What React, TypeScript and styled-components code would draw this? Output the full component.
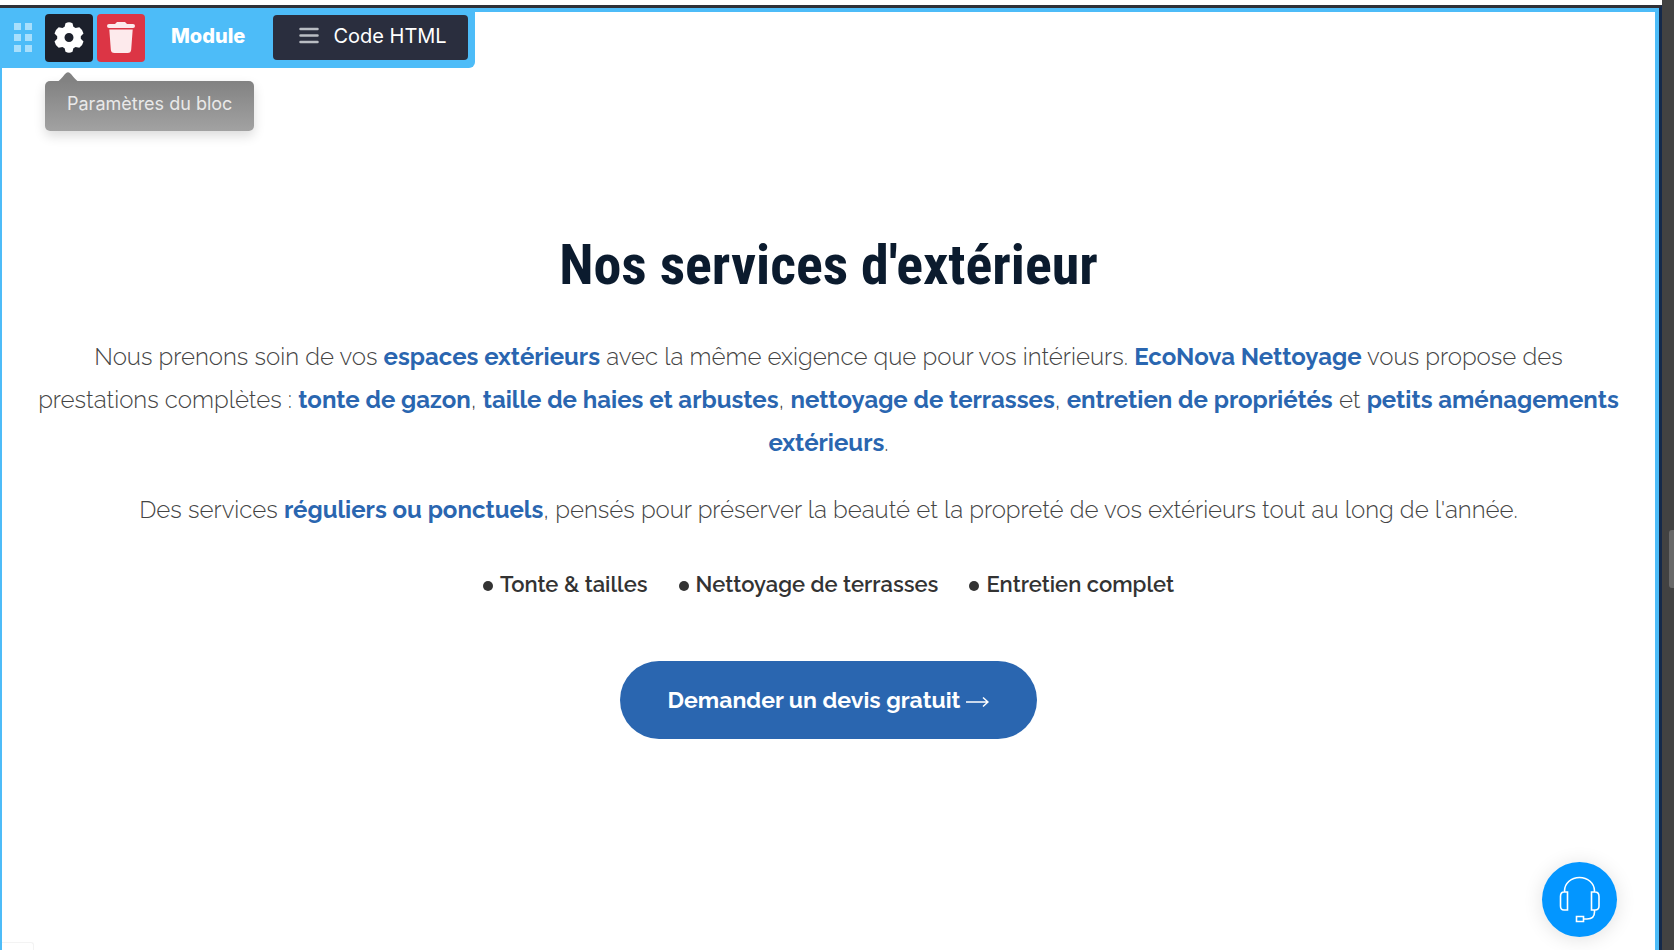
import React from "react";
import styled, { createGlobalStyle } from "styled-components";

const GlobalStyle = createGlobalStyle`
  * { box-sizing: border-box; }
  html, body { margin: 0; overflow: hidden; background: #fff; }
`;

const Page = styled.div`
  display: flex;
  height: 100vh;
  font-family: Inter, "Liberation Sans", sans-serif;
`;

const Viewport = styled.div`
  flex: 1;
  min-width: 0;
  display: flex;
  flex-direction: column;
  padding-top: 5px;
`;

const Preview = styled.div`
  flex: 1;
  border-top: 3px solid #2f3036;
  border-right: 3px solid #14294a;
  display: flex;
`;

const Block = styled.section`
  position: relative;
  flex: 1;
  min-width: 0;
  border: 4px solid #4dbcf8;
  border-left-width: 2px;
  border-bottom: 0;
`;

const ScrollTrack = styled.div`
  width: 12px;
  background: #424242;
  display: flex;
  flex-direction: column;
  align-items: flex-end;
  padding-top: 530px;
`;

const ScrollThumb = styled.div`
  width: 5px;
  height: 58px;
  border-radius: 3px 0 0 3px;
  background: #686868;
`;

const Toolbar = styled.div`
  position: absolute;
  top: -4px;
  left: -2px;
  height: 60px;
  display: flex;
  align-items: flex-start;
  padding: 6px 7px 0 14px;
  background: #4dbcf8;
  border-radius: 0 0 6px 0;
`;

const DragHandle = styled.div`
  display: grid;
  grid-template-columns: 7px 7px;
  gap: 4px;
  margin: 9px 13px 0 0;

  i {
    height: 7px;
    background: #a8dffc;
  }
`;

const IconButton = styled.button<{ $tone: string }>`
  width: 48px;
  height: 48px;
  margin-right: 4px;
  padding: 0 0 2px;
  border: 0;
  border-radius: 4px;
  background: ${(p) => p.$tone};
  display: grid;
  place-items: center;
`;

const ModuleLabel = styled.span`
  margin: 6px 28px 0 22px;
  font-size: 20px;
  line-height: 32px;
  font-weight: 800;
  color: #fff;
`;

const CodeButton = styled.button`
  height: 45px;
  margin-top: 1px;
  padding: 0 21px 4px 26px;
  border: 0;
  border-radius: 4px;
  background: #2a2e3e;
  color: #fff;
  font: 400 20px/40px Inter, sans-serif;
  display: flex;
  align-items: center;
  gap: 14px;
`;

const Tooltip = styled.div`
  position: absolute;
  top: 69px;
  left: 43px;
  padding: 7px 22px 11px;
  border-radius: 5px;
  background: linear-gradient(#828282, #a2a2a2);
  box-shadow: 0 5px 12px rgba(0, 0, 0, 0.14);
  color: #e9e9e9;
  font-size: 18px;
  line-height: 32px;
  white-space: nowrap;
`;

const TooltipArrow = styled.svg`
  position: absolute;
  left: 12px;
  top: -9px;
`;

const Content = styled.div`
  padding: 217px 30px 0;
  display: flex;
  flex-direction: column;
  align-items: center;
  font-family: Raleway, Lato, sans-serif;
  text-align: center;
`;

const Title = styled.h2`
  margin: 0 0 34px;
  font: 700 56px/72px "Roboto Condensed", "Liberation Sans Narrow", Roboto, sans-serif;
  color: #0b1b2e;
`;

const Paragraph = styled.p`
  margin: 0 0 24px;
  font-size: 24px;
  line-height: 43px;
  font-weight: 300;
  color: #444;

  strong {
    font-weight: 700;
    color: #2a66b0;
  }
`;

const Highlights = styled.ul`
  display: flex;
  gap: 31px;
  margin: 9px 0 57px;
  padding: 0;
  list-style: none;
  font-size: 22px;
  line-height: 40px;
  font-weight: 600;
  color: #333;

  li {
    display: flex;
    align-items: center;
    gap: 7px;
  }

  li::before {
    content: "";
    width: 10px;
    height: 10px;
    margin-top: 3px;
    border-radius: 50%;
    background: #333;
  }
`;

const QuoteLink = styled.a`
  display: flex;
  align-items: center;
  gap: 6px;
  height: 78px;
  padding: 0 48px 2px;
  border-radius: 39px;
  background: #2a66b0;
  color: #fff;
  font-size: 23px;
  font-weight: 700;
  text-decoration: none;

  svg {
    margin-top: 6px;
  }
`;

const SupportButton = styled.button`
  position: absolute;
  right: 38px;
  bottom: 13px;
  width: 75px;
  height: 75px;
  padding: 0;
  border: 0;
  border-radius: 50%;
  background: #0396ff;
  box-shadow: 0 2px 20px rgba(0, 0, 0, 0.12);
`;

const StatusCorner = styled.div`
  position: absolute;
  left: 0;
  bottom: 0;
  width: 32px;
  height: 8px;
  border: 1px solid #f3f3f3;
  border-width: 1px 1px 0 0;
  border-radius: 0 3px 0 0;
`;

export default function App() {
  return (
    <Page>
      <GlobalStyle />
      <Viewport>
        <Preview>
          <Block>
            <Content>
              <Title>Nos services d'extérieur</Title>
              <Paragraph>
                Nous prenons soin de vos <strong>espaces extérieurs</strong> avec la même exigence que pour vos
                intérieurs. <strong>EcoNova Nettoyage</strong> vous propose des prestations complètes :{" "}
                <strong>tonte de gazon</strong>, <strong>taille de haies et arbustes</strong>,{" "}
                <strong>nettoyage de terrasses</strong>, <strong>entretien de propriétés</strong> et{" "}
                <strong>petits aménagements extérieurs</strong>.
              </Paragraph>
              <Paragraph>
                Des services <strong>réguliers ou ponctuels</strong>, pensés pour préserver la beauté et la propreté
                de vos extérieurs tout au long de l'année.
              </Paragraph>
              <Highlights>
                <li>Tonte &amp; tailles</li>
                <li>Nettoyage de terrasses</li>
                <li>Entretien complet</li>
              </Highlights>
              <QuoteLink href="#devis">
                Demander un devis gratuit
                <svg width="23" height="12" viewBox="0 0 23 12" fill="none" stroke="#fff" strokeWidth="1.5" aria-hidden="true">
                  <path d="M0 6H22M17 1.5L22 6L17 10.5" />
                </svg>
              </QuoteLink>
            </Content>

            <Toolbar>
              <DragHandle>
                <i /><i /><i /><i /><i /><i />
              </DragHandle>
              <IconButton $tone="#1c202b" aria-label="Paramètres du bloc">
                <svg width="30" height="31" viewBox="0 0 30 31" aria-hidden="true">
                  <path
                    fill="#fff"
                    fillRule="evenodd"
                    d="M11.5 1.2Q15 -.6 18.5 1.2L19.4 4.8L21.6 6.1L25.3 5.2Q28.7 7.6 29.5 11.6L26.8 14.2V16.8L29.5 19.4Q28.7 23.4 25.3 25.8L21.6 24.9L19.4 26.2L18.5 29.8Q15 31.6 11.5 29.8L10.6 26.2L8.4 24.9L4.7 25.8Q1.3 23.4 .5 19.4L3.2 16.8V14.2L.5 11.6Q1.3 7.6 4.7 5.2L8.4 6.1L10.6 4.8ZM15 11A4.5 4.5 0 1 0 15 20A4.5 4.5 0 1 0 15 11Z"
                  />
                </svg>
              </IconButton>
              <IconButton $tone="#dc3545" aria-label="Supprimer">
                <svg width="28" height="32" viewBox="0 0 28 32" fill="#fdeaec" aria-hidden="true">
                  <path d="M2 3H8L10 1H18L20 3H26Q28 3 28 5T26 7H2Q0 7 0 5T2 3ZM2.3 8.5H25.7L24.2 28.5Q24 32 20.5 32H7.5Q4 32 3.8 28.5Z" />
                </svg>
              </IconButton>
              <ModuleLabel>Module</ModuleLabel>
              <CodeButton>
                <svg width="20" height="17" viewBox="0 0 20 17" stroke="#b9bdc3" strokeWidth="2.5" strokeLinecap="round" aria-hidden="true">
                  <path d="M1.5 2H18.5M1.5 8.5H18.5M1.5 15H18.5" />
                </svg>
                Code HTML
              </CodeButton>
            </Toolbar>

            <Tooltip role="tooltip">
              <TooltipArrow width="22" height="10" viewBox="0 0 22 10" fill="#828282" aria-hidden="true">
                <path d="M0 10Q3 8.5 8 2Q11 -1.5 14 2Q19 8.5 22 10Z" />
              </TooltipArrow>
              Paramètres du bloc
            </Tooltip>

            <SupportButton aria-label="Assistance">
              <svg width="75" height="75" viewBox="0 0 75 75" fill="none" stroke="#fff" strokeWidth="1.6" aria-hidden="true">
                <path d="M22.5 30V29C22.5 21 29.5 15.5 37.5 15.5S52.5 21 52.5 29V30M25.5 30V48H22Q18.5 48 18.5 44V34.5Q18.5 30 22 30ZM49.5 30V48H53Q57 48 57 44V34.5Q57 30 53 30ZM52.5 48V50Q52.5 57 45 57H42M34.5 54.5H41.5V59.5H34.5Z" />
              </svg>
            </SupportButton>
            <StatusCorner />
          </Block>
        </Preview>
      </Viewport>
      <ScrollTrack>
        <ScrollThumb />
      </ScrollTrack>
    </Page>
  );
}
